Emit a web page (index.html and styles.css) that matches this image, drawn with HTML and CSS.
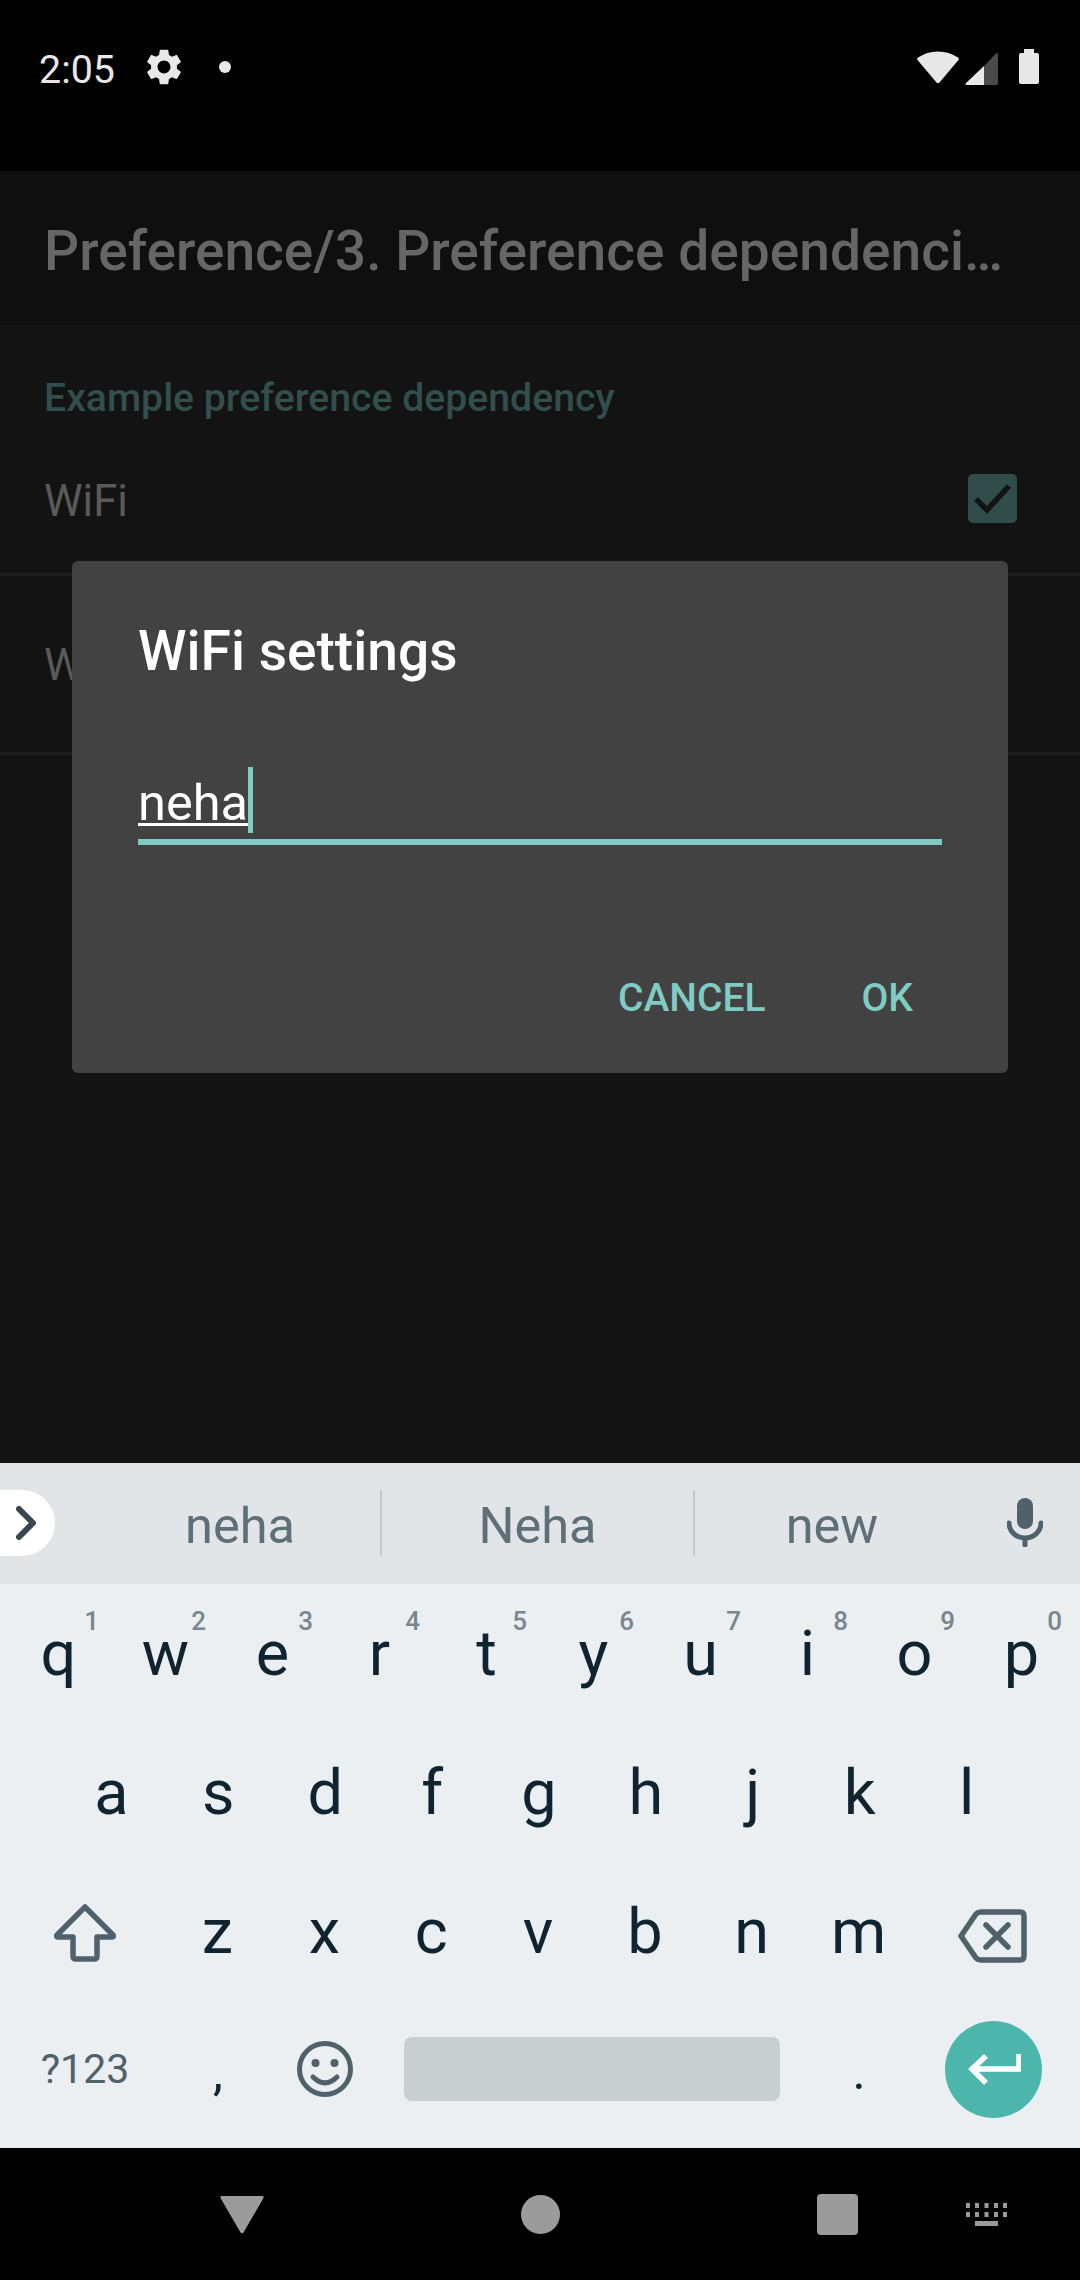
FILE: index.html
```html
<!DOCTYPE html>
<html lang="en">
<head>
  <meta charset="UTF-8">
  <title>WiFi settings</title>
  <link rel="stylesheet" href="styles.css">
</head>
<body>
  <header class="status">
    <span class="time">2:05</span>
    <svg class="gear" viewBox="2 2 20 20" width="36" height="36"><path d="M19.14 12.94c.04-.3.06-.61.06-.94 0-.32-.02-.64-.07-.94l2.03-1.58c.18-.14.23-.41.12-.61l-1.92-3.32c-.12-.22-.37-.29-.59-.22l-2.39.96c-.5-.38-1.03-.7-1.62-.94l-.36-2.54c-.04-.24-.24-.41-.48-.41h-3.84c-.24 0-.43.17-.47.41l-.36 2.54c-.59.24-1.13.57-1.62.94l-2.39-.96c-.22-.08-.47 0-.59.22L2.74 8.87c-.12.21-.08.47.12.61l2.03 1.58c-.05.3-.09.63-.09.94s.02.64.07.94l-2.03 1.58c-.18.14-.23.41-.12.61l1.92 3.32c.12.22.37.29.59.22l2.39-.96c.5.38 1.03.7 1.62.94l.36 2.54c.05.24.24.41.48.41h3.84c.24 0 .44-.17.47-.41l.36-2.54c.59-.24 1.13-.56 1.62-.94l2.39.96c.22.08.47 0 .59-.22l1.92-3.32c.12-.22.07-.47-.12-.61l-2.01-1.58zM12 15.6c-1.98 0-3.6-1.62-3.6-3.6s1.62-3.6 3.6-3.6 3.6 1.62 3.6 3.6-1.62 3.6-3.6 3.6z"/></svg>
    <span class="status-dot"></span>
    <svg class="wifi" viewBox="0 0 42 33" width="42" height="33"><path d="M1 6.5C7 2.5 13.500 .5 21 .5S35 2.500 41 6.500Q42.500 7.500 41.500 9L22.500 31.500Q21 33 19.500 31.500L.5 9Q-.5 7.500 1 6.500Z"/></svg>
    <svg class="signal" viewBox="0 0 33 33" width="33" height="33">
      <path class="signal-off" d="M19 14L31 1.500Q33 0 33 2.500V31Q33 33 31 33H19Z"/>
      <path d="M19 14V33H2Q-.5 33 1 31Z"/>
    </svg>
    <svg class="battery" viewBox="0 0 20 35" width="20" height="35"><path d="M5 0H15V4H18Q20 4 20 6V33Q20 35 18 35H2Q0 35 0 33V6Q0 4 2 4H5Z"/></svg>
  </header>

  <main class="app">
    <div class="toolbar">Preference/3. Preference dependenci…</div>
    <div class="section-title">Example preference dependency</div>
    <div class="pref-row pref-wifi">
      <span class="pref-label">WiFi</span>
      <svg class="checkbox" viewBox="0 0 49 49" width="49" height="49">
        <rect width="49" height="49" rx="5"/>
        <path class="checkbox-tick" d="M8 25L19 36L41 12"/>
      </svg>
    </div>
    <div class="pref-row pref-settings">
      <span class="pref-label">W</span>
    </div>

    <div class="dialog">
      <div class="dialog-title">WiFi settings</div>
      <div class="field">
        <span class="field-text">neha</span>
        <span class="cursor"></span>
      </div>
      <div class="dialog-actions">
        <span class="dialog-btn">CANCEL</span>
        <span class="dialog-btn btn-ok">OK</span>
      </div>
    </div>
  </main>

  <section class="keyboard">
    <div class="strip">
      <div class="expand">
        <svg viewBox="0 0 22 34" width="22" height="34"><path d="M3 3L17 17L3 31"/></svg>
      </div>
      <div class="suggestion sug-first">neha</div>
      <div class="suggestion sug-second">Neha</div>
      <div class="suggestion sug-third">new</div>
      <svg class="mic" viewBox="0 0 36 49" width="36" height="49">
        <rect x="10" y="0" width="16" height="31" rx="8" class="mic-body"/>
        <path d="M2 25A16 15 0 0 0 34 25M18 40V47"/>
      </svg>
    </div>

    <div class="row">
      <div class="key">q<span class="digit">1</span></div>
      <div class="key">w<span class="digit">2</span></div>
      <div class="key">e<span class="digit">3</span></div>
      <div class="key">r<span class="digit">4</span></div>
      <div class="key">t<span class="digit">5</span></div>
      <div class="key">y<span class="digit">6</span></div>
      <div class="key">u<span class="digit">7</span></div>
      <div class="key">i<span class="digit">8</span></div>
      <div class="key">o<span class="digit">9</span></div>
      <div class="key">p<span class="digit">0</span></div>
    </div>

    <div class="row row-home">
      <div class="key">a</div>
      <div class="key">s</div>
      <div class="key">d</div>
      <div class="key">f</div>
      <div class="key">g</div>
      <div class="key">h</div>
      <div class="key">j</div>
      <div class="key">k</div>
      <div class="key">l</div>
    </div>

    <div class="row">
      <div class="key key-wide">
        <svg class="shift" viewBox="0 0 62 58" width="62" height="58"><path d="M31 3L59 31Q60 33 58 33H43V52Q43 55 40 55H22Q19 55 19 52V33H4Q2 33 3 31Z"/></svg>
      </div>
      <div class="key">z</div>
      <div class="key">x</div>
      <div class="key">c</div>
      <div class="key">v</div>
      <div class="key">b</div>
      <div class="key">n</div>
      <div class="key">m</div>
      <div class="key key-end">
        <svg class="backspace" viewBox="0 0 69 54" width="69" height="54"><path d="M3 27L18 5Q20 3 23 3H62Q66 3 66 7V47Q66 51 62 51H23Q20 51 18 49ZM28 16L50 38M50 16L28 38"/></svg>
      </div>
    </div>

    <div class="row row-bottom">
      <div class="key key-symbols">?123</div>
      <div class="key key-punct">,</div>
      <div class="key">
        <svg class="emoji" viewBox="0 0 56 56" width="56" height="56">
          <circle cx="28" cy="28" r="25.500"/>
          <path d="M16 36Q28 48 40 36"/>
          <circle class="emoji-eye" cx="18.500" cy="22" r="4"/>
          <circle class="emoji-eye" cx="37.500" cy="22" r="4"/>
        </svg>
      </div>
      <div class="key key-space"><span class="space-bar"></span></div>
      <div class="key key-punct">.</div>
      <div class="key key-end">
        <span class="enter">
          <svg viewBox="0 0 54 34" width="54" height="34"><path d="M52 2V17H6M19 4L5 17L19 31"/></svg>
        </span>
      </div>
    </div>
  </section>

  <nav class="navbar">
    <svg class="nav-back" viewBox="0 0 44 38" width="44" height="38"><path d="M2 0H42Q44 0 43.500 2L23.500 36.500Q22 38 20.500 36.500L.5 2Q0 0 2 0Z"/></svg>
    <span class="nav-home"></span>
    <span class="nav-recent"></span>
    <svg class="nav-ime" viewBox="0 0 41 23" width="41" height="23">
      <rect x="0" width="4" height="5"/><rect x="9" width="4" height="5"/><rect x="18.500" width="4" height="5"/><rect x="28" width="4" height="5"/><rect x="37" width="4" height="5"/>
      <rect x="0" y="9" width="4" height="5"/><rect x="9" y="9" width="4" height="5"/><rect x="18.500" y="9" width="4" height="5"/><rect x="28" y="9" width="4" height="5"/><rect x="37" y="9" width="4" height="5"/>
      <rect x="9" y="18" width="23" height="5"/>
    </svg>
  </nav>
</body>
</html>
```

FILE: styles.css
```css
* {
  box-sizing: border-box;
}

body {
  margin: 0;
  width: 1080px;
  height: 2280px;
  display: flex;
  flex-direction: column;
  font-family: Roboto, "Liberation Sans", sans-serif;
  background-color: #000;
  overflow: hidden;
}

/* status bar */
.status {
  height: 171px;
  padding: 40px 41px 0 39px;
  display: flex;
  align-items: flex-start;
  background-color: #000;
  fill: #e8e8e8;
}

.time {
  padding-top: 8px;
  font-size: 39.4px;
  line-height: 44px;
  color: #e8e8e8;
}

.gear {
  margin: 9px 0 0 31px;
}

.status-dot {
  width: 12px;
  height: 12px;
  margin: 21px 0 0 37px;
  border-radius: 50%;
  background-color: #e8e8e8;
}

.wifi {
  margin: 11px 0 0 auto;
}

.signal {
  margin: 12px 0 0 6px;
}

.signal-off {
  fill: #4a4a4a;
}

.battery {
  margin: 9px 0 0 21px;
}

/* dimmed activity behind the dialog */
.app {
  position: relative;
  flex: 1;
  background-color: #131313;
}

.toolbar {
  height: 154px;
  padding: 6px 44px 0;
  display: flex;
  align-items: center;
  background-color: #0f0f0f;
  font-size: 55.1px;
  font-weight: 500;
  color: #666;
  white-space: nowrap;
}

.section-title {
  padding: 51px 44px 1px;
  font-size: 39.2px;
  font-weight: 500;
  line-height: 44px;
  color: #324e4d;
}

.pref-row {
  display: flex;
  justify-content: space-between;
  align-items: flex-start;
  padding: 53px 44px 46px;
  border-bottom: 3px solid #1d1d1d;
}

.pref-settings {
  padding: 65px 44px 61px;
}

.pref-label {
  font-size: 43.5px;
  line-height: 50px;
  color: #5a5a5a;
}

.pref-wifi .pref-label {
  margin-top: 3px;
}

.checkbox {
  margin-right: 19px;
  fill: #304c4b;
}

.checkbox-tick {
  fill: none;
  stroke: #131313;
  stroke-width: 5.500;
}

/* dialog */
.dialog {
  position: absolute;
  top: 390px;
  left: 72px;
  width: 936px;
  height: 512px;
  padding: 59px 66px 0;
  background-color: #424242;
  border-radius: 6px;
}

.dialog-title {
  font-size: 55.1px;
  font-weight: 500;
  line-height: 62px;
  color: #fff;
}

.field {
  height: 78px;
  margin-top: 85px;
  display: flex;
  align-items: flex-start;
  border-bottom: 6px solid #80cbc4;
}

.field-text {
  margin-top: 15px;
  font-size: 50.5px;
  line-height: 41px;
  color: #fff;
  border-bottom: 3px solid #fff;
}

.cursor {
  width: 5px;
  height: 66px;
  background-color: #80cbc4;
}

.dialog-actions {
  margin-top: 131px;
  padding-right: 29px;
  display: flex;
  justify-content: flex-end;
}

.dialog-btn {
  font-size: 39px;
  font-weight: 500;
  line-height: 44px;
  color: #80cbc4;
}

.btn-ok {
  margin-left: 96px;
}

/* keyboard */
.keyboard {
  height: 685px;
  background-color: #ebeff2;
}

.strip {
  height: 121px;
  padding-top: 27px;
  display: flex;
  align-items: flex-start;
  background-color: #e2e5e8;
}

.expand {
  width: 55px;
  height: 66px;
  padding: 16px 0 0 16px;
  background-color: #fff;
  border-radius: 0 33px 33px 0;
}

.expand svg {
  display: block;
  fill: none;
  stroke: #37474f;
  stroke-width: 6;
  stroke-linecap: round;
  stroke-linejoin: round;
}

.suggestion {
  height: 66px;
  padding-top: 6px;
  text-align: center;
  font-size: 50.5px;
  line-height: 59px;
  color: #5f6f78;
  border-right: 2px solid #c4c9cc;
}

.sug-first {
  width: 282px;
  margin-left: 45px;
}

.sug-second {
  width: 313px;
}

.sug-third {
  width: 274px;
  border-right: 0;
}

.mic {
  margin: 8px 0 0 38px;
  fill: none;
  stroke: #4f616b;
  stroke-width: 5;
  stroke-linecap: round;
}

.mic-body {
  fill: #4f616b;
  stroke: none;
}

.row {
  display: flex;
  height: 139px;
  padding: 0 5px;
}

.row-home {
  padding: 0 60px 0 58px;
}

.row-bottom {
  height: 136px;
}

.key {
  position: relative;
  flex: 1;
  display: flex;
  justify-content: center;
  align-items: center;
  font-size: 63px;
  color: #0f2430;
}

.key-wide {
  flex: 0 0 159px;
}

.key-end {
  flex: 0 0 163px;
}

.digit {
  position: absolute;
  top: 22px;
  right: 13px;
  font-size: 26px;
  font-weight: 500;
  line-height: 30px;
  color: #78868e;
}

.shift,
.backspace {
  fill: none;
  stroke: #4f616b;
  stroke-width: 5.500;
  stroke-linejoin: round;
  stroke-linecap: round;
}

.shift {
  margin-top: 3px;
}

.backspace {
  margin: 9px 2px 0 0;
}

.key-symbols {
  flex: 0 0 160px;
  font-size: 41px;
  color: #4f616b;
}

.key-punct {
  padding-top: 6px;
  font-size: 50px;
}

.emoji {
  margin-left: 2px;
  fill: none;
  stroke: #4f616b;
  stroke-width: 5;
  stroke-linecap: round;
}

.emoji-eye {
  fill: #4f616b;
  stroke: none;
}

.key-space {
  flex: 0 0 429px;
}

.space-bar {
  width: 376px;
  height: 64px;
  background-color: #c9ced1;
  border-radius: 8px;
}

.enter {
  width: 97px;
  height: 97px;
  display: flex;
  justify-content: center;
  align-items: center;
  background-color: #4db6ac;
  border-radius: 50%;
}

.enter svg {
  fill: none;
  stroke: #fff;
  stroke-width: 5.500;
}

/* navigation bar */
.navbar {
  height: 132px;
  padding-left: 220px;
  display: flex;
  align-items: center;
  background-color: #000;
  fill: #9b9b9b;
}

.nav-back {
  margin-top: 2px;
}

.nav-home {
  width: 39px;
  height: 39px;
  margin-left: 257px;
  border-radius: 50%;
  background-color: #9b9b9b;
}

.nav-recent {
  width: 41px;
  height: 41px;
  margin-left: 257px;
  border-radius: 4px;
  background-color: #9b9b9b;
}

.nav-ime {
  margin-left: 108px;
}
```
